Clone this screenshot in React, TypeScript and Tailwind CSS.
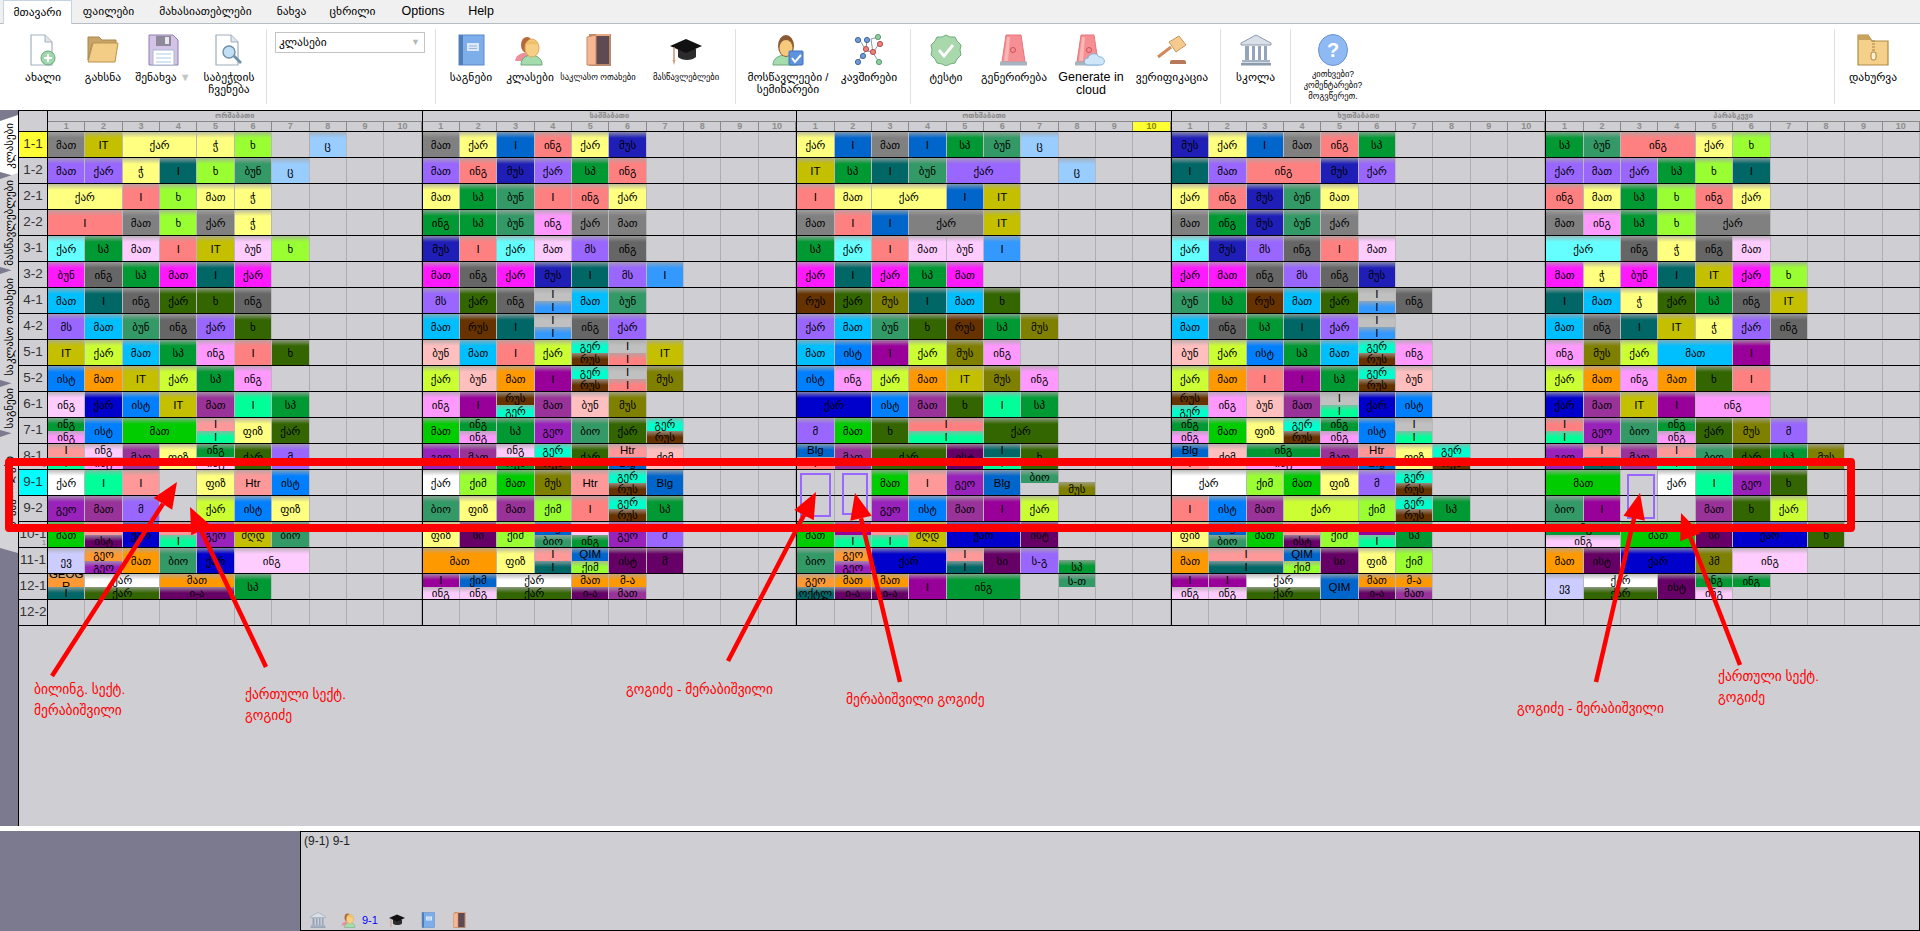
import React from "react";

const C: Record<string, string> = {
  G: "bg-[#808080]", Y: "bg-[#c4c000]", LY: "bg-[#ffff80]", LM: "bg-[#99ff33]", LB: "bg-[#99ccff]",
  PU: "bg-[#9966ff]", TE: "bg-[#006666]", SG: "bg-[#339966]", SA: "bg-[#ff8080]", CY: "bg-[#66ffff]",
  GR: "bg-[#009933]", PK: "bg-[#ffccff]", NV: "bg-[#1f1fb8]", MG: "bg-[#ff19ff]", DG: "bg-[#666666]",
  SK: "bg-[#00bfff]", OG: "bg-[#336600]", YG: "bg-[#ccff33]", BL: "bg-[#0066cc]", PN: "bg-[#ff99ff]",
  RS: "bg-[#ffbfbf]", BR: "bg-[#663300]", BG: "bg-[#00cc00]", OR: "bg-[#ff9900]", AZ: "bg-[#0080ff]",
  RB: "bg-[#0000cc]", PL: "bg-[#993399]", MT: "bg-[#00ff99]", TQ: "bg-[#00ffcc]", VI: "bg-[#990099]",
  GE: "bg-[#9922bb]", OL: "bg-[#808000]", DV: "bg-[#660066]", LG: "bg-[#c0c0c0]", LR: "bg-[#ff9999]",
  DB: "bg-[#3399ff]", LV: "bg-[#ccccff]", W: "bg-[#ffffff]", OO: "bg-[#ff9933]",
};

const GER = "გერ TQ/რუს BR";
const REG = "რუს BR/გერ TQ";
const INGS = "ინგ GR/ინგ PN";
const QAR2 = "ქარ W/ქარ OG 2";
const MA = "მათ OR/ი-ა DV";

const days: string[][][] = [
  [
    ["მათ G", "IT Y", "ქარ LY 2", "ჭ LY", "ხ LM", "-", "ც LB"],
    ["მათ PU", "ქარ PU", "ჭ LY", "I TE", "ხ LM", "ბუნ SG", "ც LB"],
    ["ქარ LY 2", "I SA", "ხ LM", "მათ LY", "ჭ LY"],
    ["I SA 2", "მათ G", "ხ LM", "ქარ G", "ჭ LY"],
    ["ქარ CY", "სპ GR", "მათ PK", "I SA", "IT Y", "ბუნ PK", "ხ LM"],
    ["ბუნ MG", "ინგ DG", "სპ GR", "მათ MG", "I TE", "ქარ MG"],
    ["მათ SK", "I TE", "ინგ DG", "ქარ OG", "ხ OG", "ინგ DG"],
    ["მს PU", "მათ SK", "ბუნ SG", "ინგ DG", "ქარ PU", "ხ OG"],
    ["IT Y", "ქარ YG", "მათ SK", "სპ GR", "ინგ PN", "I SA", "ხ OG"],
    ["ისტ AZ", "მათ OR", "IT Y", "ქარ YG", "სპ GR", "ინგ PN"],
    ["ინგ PK", "ქარ RB", "ისტ AZ", "IT Y", "მათ PL", "I MT", "სპ GR"],
    [INGS, "ისტ AZ", "მათ BG 2", "I LR/I MT", "ფიზ LY", "ქარ OG"],
    ["I LR/I MT", "ინგ PK/ინგ PN", "მათ PL", "ფიზ LY", "ინგ GR/ინგ PK", "ქარ OG", "მ PU"],
    ["ქარ W", "I MT", "I LR", "-", "ფიზ LY", "Htr LR", "ისტ AZ"],
    ["გეო GE", "მათ PL", "მ PU", "-", "ქარ YG", "ისტ AZ", "ფიზ LY"],
    ["მათ BG", "I LR/ისტ DV", "ქარ RB", "I LR/I MT", "გეო GE", "ძღდ Y", "ბიო SG"],
    ["ევ LV", "გეო OO/გეო GE", "მათ OR", "ბიო SG", "ქარ RB", "ინგ PK 2"],
    ["GEOGR OO/I TE", QAR2, "მათ OR/ი-ა DV 2", "სპ GR"],
    [],
  ],
  [
    ["მათ G", "ქარ LY", "I BL", "ინგ SA", "ქარ LY", "მუს NV"],
    ["მათ PU", "ინგ SA", "მუს NV", "ქარ PU", "სპ GR", "ინგ SA"],
    ["მათ LY", "სპ GR", "ბუნ SG", "I SA", "ინგ SA", "ქარ LY"],
    ["ინგ GR", "სპ GR", "ბუნ SG", "ინგ PN", "ქარ G", "მათ G"],
    ["მუს NV", "I SA", "ქარ CY", "მათ PK", "მს PU", "ინგ DG"],
    ["მათ MG", "ინგ DG", "ქარ MG", "მუს NV", "I TE", "მს PU", "I DB"],
    ["მს PU", "ქარ OG", "ინგ DG", "I LG/I DB", "მათ SK", "ბუნ SG"],
    ["მათ SK", "რუს BR", "I TE", "I LG/I DB", "ინგ DG", "ქარ PU"],
    ["ბუნ RS", "მათ SK", "I SA", "ქარ YG", GER, "I LG/I SA", "IT Y"],
    ["ქარ YG", "ბუნ RS", "მათ OR", "I VI", GER, "I LG/I SA", "მუს OL"],
    ["ინგ PN", "I VI", REG, "მათ PL", "ბუნ RS", "მუს OL"],
    ["მათ BG", INGS, "სპ GR", "გეო GE", "ბიო SG", "ქარ OG", GER],
    ["გეო GE", "მათ PL", "ინგ PK/რუს GR", GER, "ქარ OG", "Htr LR/Blg BL", "ქიმ RS"],
    ["ქარ W", "ქიმ LM", "მათ BG", "მუს OL", "Htr LR", GER, "Blg BL"],
    ["ბიო SG", "ფიზ LY", "მათ PL", "ქიმ LM", "I SA", GER, "სპ GR"],
    ["ფიზ LY", "სი DV", "ქიმ LM", "Blg BL/ბიო SG", "I PK/ინგ GR", "გეო GE", "მ PU"],
    ["მათ OR 2", "ფიზ LY", "I LR/I TE", "QIM BL/ქიმ LM", "ისტ DV", "მ DV"],
    ["I VI/ინგ PK", "ქიმ BL/ინგ PK", QAR2, MA, "მ-ა OR/მათ PL"],
    [],
  ],
  [
    ["ქარ LY", "I BL", "მათ G", "I BL", "სპ GR", "ბუნ SG", "ც LB"],
    ["IT Y", "სპ GR", "I TE", "ბუნ SG", "ქარ PU 2", "-", "ც LB"],
    ["I SA", "მათ LY", "ქარ LY 2", "I BL", "IT Y"],
    ["მათ G", "I SA", "I BL", "ქარ G 2", "IT Y"],
    ["სპ GR", "ქარ CY", "I SA", "მათ PK", "ბუნ PK", "I DB"],
    ["ქარ MG", "I TE", "ქარ MG", "სპ GR", "მათ MG"],
    ["რუს BR", "ქარ OG", "მუს OL", "I TE", "მათ SK", "ხ OG"],
    ["ქარ PU", "მათ SK", "ბუნ SG", "ხ OG", "რუს BR", "სპ GR", "მუს OL"],
    ["მათ SK", "ისტ AZ", "I VI", "ქარ YG", "მუს OL", "ინგ PN"],
    ["ისტ AZ", "ინგ PN", "ქარ YG", "მათ OR", "IT Y", "მუს OL", "ინგ PN"],
    ["ქარ RB 2", "ისტ AZ", "მათ PL", "ხ OG", "I MT", "სპ GR"],
    ["მ PU", "მათ BG", "ხ OG", "I SA/I MT 2", "ქარ OG 2"],
    ["Blg BL/I SA", "მათ PL", "ქარ OG 2", "ისტ DV", "I TE/I MT", "ხ OG"],
    ["-", "-", "მათ BG", "I LR", "გეო GE", "Blg BL", "ბიო SG ^", "მუს OL v"],
    ["-", "-", "გეო GE", "ისტ AZ", "მათ PL", "I VI", "ქარ YG"],
    ["მათ BG", "I VI/I MT", "I LR/I MT", "ძღდ Y", "ქარ RB 2", "ისტ DV"],
    ["ბიო SG", "გეო OO/გეო GE", "ქარ RB 2", "I LR/I TE", "სი DV", "ს-გ PU", "სპ GR v"],
    ["გეო OO/ოქტლ TE", MA, MA, "I VI", "ინგ GR 2", "-", "ს-თ SG ^"],
    [],
  ],
  [
    ["მუს NV", "ქარ LY", "I BL", "მათ G", "ინგ SA", "სპ GR"],
    ["I TE", "მათ PU", "ინგ SA 2", "მუს NV", "ქარ PU"],
    ["ქარ LY", "ინგ SA", "მუს NV", "ბუნ SG", "მათ LY"],
    ["მათ G", "ინგ GR", "მუს NV", "ბუნ SG", "ქარ G"],
    ["ქარ CY", "მუს NV", "მს PU", "ინგ DG", "I SA", "მათ PK"],
    ["ქარ MG", "მათ MG", "ინგ DG", "მს PU", "ინგ DG", "მუს NV"],
    ["ბუნ SG", "სპ GR", "რუს BR", "მათ SK", "ქარ OG", "I LG/I DB", "ინგ DG"],
    ["მათ SK", "ინგ DG", "სპ GR", "I TE", "ქარ PU", "I LG/I DB"],
    ["ბუნ RS", "ქარ YG", "ისტ AZ", "სპ GR", "მათ SK", GER, "ინგ PN"],
    ["ქარ YG", "მათ OR", "I SA", "I VI", "სპ GR", GER, "ბუნ RS"],
    [REG, "ინგ PN", "ბუნ RS", "მათ PL", "I LG/I MT", "ქარ RB", "ისტ AZ"],
    [INGS, "მათ BG", "ფიზ LY", GER, INGS, "ისტ AZ", "I LG/I MT"],
    ["Blg BL/I LR", "ქიმ RS", "ინგ GR/ინგ PN 2", "მათ PL", "Htr LR/Blg BL", "ფიზ LY", GER],
    ["ქარ W 2", "ქიმ LM", "მათ BG", "ფიზ LY", "მ PU", GER],
    ["I SA", "ისტ AZ", "მათ PL", "ქარ YG 2", "ქიმ LM", GER, "სპ GR"],
    ["ფიზ LY", "Blg BL/ბიო SG", "მათ BG", "I LR/ისტ DV", "ქიმ LM", "I VI/I MT", "სპ GR"],
    ["მათ OR", "I LR/I TE 2", "QIM BL/ქიმ LM", "სი DV", "ფიზ LY", "ქიმ LM"],
    ["I VI/ინგ PK", "I VI/ინგ PK", QAR2, "QIM BL", MA, "მ-ა OR/მათ PL"],
    [],
  ],
  [
    ["სპ GR", "ბუნ SG", "ინგ SA 2", "ქარ LY", "ხ LM"],
    ["ქარ PU", "მათ PU", "ქარ PU", "სპ GR", "ხ LM", "I TE"],
    ["ინგ SA", "მათ LY", "სპ GR", "ხ LM", "ინგ SA", "ქარ LY"],
    ["მათ G", "ინგ PN", "სპ GR", "ხ LM", "ქარ G 2"],
    ["ქარ CY 2", "ინგ DG", "ჭ LY", "ინგ DG", "მათ PK"],
    ["მათ MG", "ჭ LY", "ბუნ MG", "I TE", "IT Y", "ქარ MG", "ხ LM"],
    ["I TE", "მათ SK", "ჭ LY", "ქარ OG", "სპ GR", "ინგ DG", "IT Y"],
    ["მათ SK", "ინგ DG", "I TE", "IT Y", "ჭ LY", "ქარ PU", "ინგ DG"],
    ["ინგ PN", "მუს OL", "ქარ YG", "მათ SK 2", "I VI"],
    ["ქარ YG", "მათ OR", "ინგ PN", "მათ OR", "ხ OG", "I SA"],
    ["ქარ RB", "მათ PL", "IT Y", "I VI", "ინგ PN 2"],
    ["I SA/I MT", "გეო GE", "ბიო SG", INGS, "ქარ OG", "მუს OL", "მ PU"],
    ["გეო GE", "I LR/I TE", "მათ PL", "I LR/I MT", "ბიო SG", "ქარ OG", "სპ GR", "მუს OL"],
    ["მათ BG 2", "-", "ქარ W", "I MT", "გეო GE", "ხ OG"],
    ["ბიო SG", "I VI", "-", "-", "მათ PL", "ხ OG", "ქარ YG"],
    ["ინგ GR/ინგ PK 2", "მათ BG 2", "სი DV", "ქარ RB 2", "ხ OG"],
    ["მათ OR", "ისტ DV", "ქარ RB 2", "ჰმ OL", "ინგ PK 2"],
    ["ევ LV", QAR2, "ისტ DV", "ინგ GR/ინგ PK", "ინგ GR ^"],
    [],
  ],
];

const rowNames = ["1-1", "1-2", "2-1", "2-2", "3-1", "3-2", "4-1", "4-2", "5-1", "5-2", "6-1", "7-1", "8-1", "9-1", "9-2", "10-1", "11-1", "12-1", "12-2"];
const dayNames = ["ორშაბათი", "სამშაბათი", "ოთხშაბათი", "ხუთშაბათი", "პარასკევი"];
const periods = [1, 2, 3, 4, 5, 6, 7, 8, 9, 10];

const isLatin = (s: string) => /^[A-Za-z]+$/.test(s);

function Label({ text }: { text: string }) {
  const latin = isLatin(text);
  return (
    <span className={latin ? "relative block text-[11.5px] leading-[12px] break-all" : "relative block text-[11px] leading-[12px]"}>
      {text}
    </span>
  );
}

const sheen =
  "before:absolute before:inset-x-0 before:top-0 before:h-[6px] before:bg-linear-to-b before:from-[#a8a8a8c0] before:to-transparent";

function Part({ label, color, className }: { label: string; color: string; className: string }) {
  return (
    <div className={`relative overflow-hidden flex items-center justify-center text-center text-black ${sheen} ${C[color]} ${className}`}>
      <Label text={label} />
    </div>
  );
}

const spanCls: Record<number, string> = { 1: "col-span-1", 2: "col-span-2" };

function Cell({ token }: { token: string }) {
  if (token === "-") return <div className="border-r border-[#aeaeb2]" />;
  const bits = token.split(" ");
  const last = bits[bits.length - 1];
  let span = 1;
  let half = "";
  if (last === "2") {
    span = 2;
    bits.pop();
  } else if (last === "^" || last === "v") {
    half = last;
    bits.pop();
  }
  const body = bits.join(" ");
  if (body.includes("/")) {
    const [a, b] = body.split("/");
    const [la, ca] = a.split(" ");
    const [lb, cb] = b.split(" ");
    return (
      <div className={`flex flex-col min-w-0 border-r border-[#b8b8bc] ${spanCls[span]}`}>
        <Part label={la} color={ca} className="h-[12.5px]" />
        <Part label={lb} color={cb} className="h-[12.5px]" />
      </div>
    );
  }
  const [l, c] = body.split(" ");
  if (half) {
    return (
      <div className={`flex flex-col min-w-0 border-r border-[#aeaeb2] ${half === "^" ? "justify-start" : "justify-end"}`}>
        <Part label={l} color={c} className="h-[13px]" />
      </div>
    );
  }
  return <Part label={l} color={c} className={`h-full min-w-0 border-r border-[#b8b8bc] ${spanCls[span]}`} />;
}

function DayRow({ tokens }: { tokens: string[] }) {
  const used = tokens.reduce((n, t) => n + (t.endsWith(" 2") ? 2 : 1), 0);
  const fill = Array.from({ length: Math.max(0, 10 - used) }, () => "-");
  return (
    <div className="flex-1 min-w-0 border-l border-black grid grid-cols-10 h-full">
      {[...tokens, ...fill].map((t, i) => (
        <Cell key={i} token={t} />
      ))}
    </div>
  );
}

/* ---------- icons ---------- */
type IP = { s?: number };
const Ico = ({ s = 32, children }: IP & { children: React.ReactNode }) => (
  <svg width={s} height={s} viewBox="0 0 32 32" className="block shrink-0">{children}</svg>
);
const IDocNew = (p: IP) => (
  <Ico {...p}>
    <path d="M4 1h14l7 7v23H4z" fill="#fff" stroke="#a5b2bf" strokeWidth="1.2" />
    <path d="M18 1v7h7" fill="#dfe5eb" stroke="#a5b2bf" />
    <circle cx="21" cy="24" r="7" fill="#9fd8ab" stroke="#6aa57a" />
    <path d="M21 20v8M17 24h8" stroke="#fff" strokeWidth="2" />
  </Ico>
);
const IFolder = (p: IP) => (
  <Ico {...p}>
    <path d="M1 3h11l3 3h14v4H5L1 26z" fill="#c8a468" stroke="#a98748" />
    <path d="M6 9h25l-3 19H1z" fill="#f3cd85" stroke="#b8934f" />
  </Ico>
);
const ISave = (p: IP) => (
  <Ico {...p}>
    <path d="M2 1h24l5 5v25H2z" fill="#d3c3e6" stroke="#8f7fb2" />
    <rect x="9" y="2" width="15" height="10" fill="#8e8a9a" />
    <rect x="18" y="3" width="4" height="7" fill="#e8e6ee" />
    <rect x="6" y="16" width="21" height="15" fill="#fff" stroke="#a9b8d0" />
    <path d="M9 20h15M9 24h15M9 28h15" stroke="#a9cdea" />
  </Ico>
);
const IPreview = (p: IP) => (
  <Ico {...p}>
    <path d="M3 1h15l7 7v23H3z" fill="#fff" stroke="#9faebc" strokeWidth="1.2" />
    <path d="M18 1v7h7" fill="#dfe5eb" stroke="#9faebc" />
    <circle cx="16" cy="18" r="6" fill="#c2e0f5" stroke="#6f8ea8" strokeWidth="1.4" />
    <path d="M21 22l7 7" stroke="#6f8ea8" strokeWidth="2.6" />
  </Ico>
);
const IBook = (p: IP) => (
  <Ico {...p}>
    <rect x="4" y="1" width="25" height="30" fill="#7eaeea" stroke="#5b8ac4" />
    <rect x="4" y="1" width="4" height="30" fill="#4f7db8" />
    <rect x="12" y="9" width="12" height="8" fill="#dbe8f8" />
    <path d="M14 12h8M14 14.500h8" stroke="#9ab8dc" />
  </Ico>
);
const IPeople = (p: IP) => (
  <Ico {...p}>
    <path d="M1 27c1-6 5-7 8-8h5v8z" fill="#ee8f9c" />
    <ellipse cx="13" cy="11" rx="6" ry="8" fill="#b5683a" />
    <path d="M7 31c0-7 5-9 9-10h2c5 1 10 3 10 10z" fill="#a5dcae" stroke="#6ea87a" />
    <ellipse cx="18" cy="14" rx="7" ry="9" fill="#f6cf85" stroke="#d9a95c" />
    <path d="M11 11c3-6 11-6 14 0-4-1-10-1-14 0z" fill="#edc06a" />
  </Ico>
);
const IDoor = (p: IP) => (
  <Ico {...p}>
    <rect x="8" y="1" width="20" height="30" fill="#5e4a52" stroke="#b98a6c" strokeWidth="2" />
    <path d="M5 3l9-2v30H5z" fill="#f6b694" stroke="#c98a66" />
    <path d="M28 1h-14" stroke="#e9a882" strokeWidth="2" />
  </Ico>
);
const ICap = (p: IP) => (
  <Ico {...p}>
    <path d="M8 15v8c4 4 14 4 18 0v-8z" fill="#2c2c2c" />
    <path d="M0 12L16 5l16 7-16 7z" fill="#111" />
    <path d="M4 13v13" stroke="#c88a68" strokeWidth="1.4" />
    <path d="M2.500 26h3l-1.500 5z" fill="#d79a78" />
  </Ico>
);
const IStudent = (p: IP) => (
  <Ico {...p}>
    <path d="M1 31c0-7 6-9 10-10h6c4 1 8 2 8 10z" fill="#a5dcae" stroke="#6ea87a" />
    <ellipse cx="14" cy="12" rx="8" ry="11" fill="#8a5a34" />
    <ellipse cx="14" cy="14" rx="6.500" ry="8" fill="#f6c97d" />
    <rect x="17" y="17" width="14" height="14" rx="1" fill="#5d92de" stroke="#3f6fb5" />
    <path d="M20 24l3 4 6-7" fill="none" stroke="#fff" strokeWidth="2" />
  </Ico>
);
const INet = (p: IP) => (
  <Ico {...p}>
    <path d="M6 5l7 11-9 13M14 5l-1 11 7 3 7-11M20 19l-2-14 8-2M20 19l6 9M13 16l7 3" fill="none" stroke="#8a9aa0" />
    <circle cx="5" cy="6" r="2.600" fill="#6f9ade" stroke="#43679c" />
    <circle cx="14" cy="6" r="2.600" fill="#6f9ade" stroke="#43679c" />
    <circle cx="25" cy="3" r="2.600" fill="#8fcf9f" stroke="#5c9a6e" />
    <circle cx="13" cy="15" r="2.600" fill="#ee7f7f" stroke="#b44f4f" />
    <circle cx="20" cy="18" r="2.600" fill="#ee7f7f" stroke="#b44f4f" />
    <circle cx="27" cy="10" r="2.600" fill="#ee7f7f" stroke="#b44f4f" />
    <circle cx="5" cy="28" r="2.600" fill="#6f9ade" stroke="#43679c" />
    <circle cx="10" cy="22" r="2.600" fill="#6f9ade" stroke="#43679c" />
    <circle cx="26" cy="28" r="2.600" fill="#8fcf9f" stroke="#5c9a6e" />
  </Ico>
);
const IBadge = (p: IP) => (
  <Ico {...p}>
    <path d="M16 1l4 2 5 0 2 4 4 4-1 5 1 5-4 4-2 4-5 1-4 2-4-2-5-1-2-4-4-4 1-5-1-5 4-4 2-4 5 0z" fill="#a9d8ac" stroke="#6fae78" />
    <path d="M9 16l5 6 9-11" fill="none" stroke="#fff" strokeWidth="2.800" />
  </Ico>
);
const IAlarm = (p: IP) => (
  <Ico {...p}>
    <path d="M8 1h15l4 27H4z" fill="#f58f93" stroke="#e5767c" />
    <path d="M9 3h3l-2 24H6z" fill="#fab5b5" />
    <circle cx="15" cy="16" r="2.500" fill="none" stroke="#c95058" />
    <rect x="2" y="27.500" width="27" height="4" fill="#a8b3c0" />
  </Ico>
);
const IAlarmCloud = (p: IP) => (
  <Ico {...p}>
    <path d="M6 1h13l4 27H2z" fill="#f58f93" stroke="#e5767c" />
    <path d="M7 3h3L8 27H4z" fill="#fab5b5" />
    <circle cx="14" cy="16" r="2.500" fill="none" stroke="#c95058" />
    <rect x="0" y="27.500" width="24" height="4" fill="#a8b3c0" />
    <path d="M13 31c-5 0-5-7 0-7 1-5 9-6 11-1 6-1 8 8 1 8z" fill="#cfe6f8" stroke="#7fb2dc" />
  </Ico>
);
const IGavel = (p: IP) => (
  <Ico {...p}>
    <path d="M2 23L15 13" stroke="#d28a5c" strokeWidth="3" />
    <path d="M13 8l10-6 7 9-10 7z" fill="#f6c98e" stroke="#c7955c" />
    <path d="M14 30h16v-2c0-1-1-2-2-2H16c-1 0-2 1-2 2z" fill="#b8795a" />
  </Ico>
);
const IBank = (p: IP) => (
  <Ico {...p}>
    <path d="M16 1L1 9v2h30V9z" fill="#d9e0e8" stroke="#8c9aac" />
    <path d="M5 12h4v14H5zM12 12h3v14h-3zM18 12h3v14h-3zM24 12h3v14h-3z" fill="#94a4bb" />
    <rect x="2" y="26" width="28" height="2.500" fill="#a5b3c6" />
    <rect x="1" y="29" width="30" height="2.500" fill="#8c9aac" />
  </Ico>
);
const IHelp = (p: IP) => (
  <Ico {...p}>
    <ellipse cx="16" cy="16" rx="14.500" ry="15.500" fill="#8fb9f2" stroke="#6a94d2" />
    <text x="16" y="23" textAnchor="middle" fontSize="20" fontWeight="700" fill="#fff" fontFamily="Liberation Sans">?</text>
  </Ico>
);
const IZip = (p: IP) => (
  <Ico {...p}>
    <path d="M1 1h10l4 6h16v24H1z" fill="#f4d08a" stroke="#b08a45" strokeWidth="1.200" />
    <path d="M1 1h10l3 5H1z" fill="#c9a25c" />
    <path d="M15 7h3M15 10h3M15 13h3M15 16h3" stroke="#a88443" />
    <rect x="14" y="18" width="5" height="8" rx="2" fill="#fff2cc" stroke="#a88443" />
  </Ico>
);

function Tool({ w, icon, children, small, tight }: { w: string; icon: React.ReactNode; children: React.ReactNode; small?: boolean; tight?: boolean }) {
  return (
    <div className={`${w} shrink-0 flex flex-col items-center`}>
      <div className="h-[45px] pt-[10px] flex items-start justify-center">{icon}</div>
      <div className={`flex items-start justify-center text-center text-black ${small ? `text-[8.5px] leading-[11px] w-full ${tight ? "" : "pt-[3px]"}` : "text-[11.5px] leading-[12px] pt-[2px]"}`}>
        {children}
      </div>
    </div>
  );
}
const Sep = () => <div className="w-px h-[75px] mt-[5px] bg-[#e0e0e0] shrink-0" />;

function Arrow({ x1, y1, x2, y2 }: { x1: number; y1: number; x2: number; y2: number }) {
  const a = Math.atan2(y2 - y1, x2 - x1);
  const l = 26, hw = 11;
  const bx = x2 - l * Math.cos(a), by = y2 - l * Math.sin(a);
  const nx = -Math.sin(a), ny = Math.cos(a);
  return (
    <g>
      <line x1={x1} y1={y1} x2={bx} y2={by} stroke="#ff0000" strokeWidth="4.500" />
      <polygon points={`${x2},${y2} ${bx + nx * hw},${by + ny * hw} ${bx - nx * hw},${by - ny * hw}`} fill="#ff0000" />
    </g>
  );
}

function Note({ cls, lines }: { cls: string; lines: string[] }) {
  return (
    <div className={`absolute text-[#ff0000] text-[13.5px] leading-[21px] whitespace-nowrap ${cls}`}>
      {lines.map((l) => (
        <div key={l}>{l}</div>
      ))}
    </div>
  );
}

const tabs = [
  { t: "კლასები", h: "h-[62px]", on: true },
  { t: "მასწავლებლები", h: "h-[99px]", on: false },
  { t: "საკლასო ოთახები", h: "h-[117px]", on: false },
  { t: "საგნები", h: "h-[54px]", on: false },
  { t: "გაკვეთილები", h: "h-[122px]", on: false },
];

const menu = [
  { t: "ფაილები", w: "w-[73px]" },
  { t: "მახასიათებლები", w: "w-[121px]" },
  { t: "ნახვა", w: "w-[51px]" },
  { t: "ცხრილი", w: "w-[71px]" },
  { t: "Options", w: "w-[70px] text-[12.5px]" },
  { t: "Help", w: "w-[46px] text-[12.5px]" },
];

export default function App() {
  return (
    <div
      className="relative w-[1920px] h-[931px] overflow-hidden flex flex-col bg-white text-black"
      style={{ fontFamily: '"Liberation Sans", "DejaVu Sans", sans-serif' }}
    >
      {/* menu tabs */}
      <div className="h-[24px] shrink-0 bg-[#f0f0f0] border-b border-[#b6bcc4] flex pl-[3px] text-[11.5px]">
        <div className="w-[69px] h-[24px] bg-white border border-b-0 border-[#c5d3e3] flex items-center justify-center">მთავარი</div>
        {menu.map((m) => (
          <div key={m.t} className={`${m.w} flex items-center justify-center`}>{m.t}</div>
        ))}
      </div>

      {/* toolbar */}
      <div className="h-[86px] shrink-0 bg-white flex items-start">
        <div className="w-[266px] shrink-0 flex pl-[13px]">
          <Tool w="w-[60px]" icon={<IDocNew />}>ახალი</Tool>
          <Tool w="w-[60px]" icon={<IFolder />}>გახსნა</Tool>
          <Tool w="w-[60px]" icon={<ISave />}>
            <span className="whitespace-nowrap">შენახვა <span className="text-[#c4c4c4] text-[11px]">▼</span></span>
          </Tool>
          <Tool w="w-[72px]" icon={<IPreview />}>საბეჭდის ჩვენება</Tool>
        </div>
        <Sep />
        <div className="w-[168px] shrink-0 pl-[8px] pt-[8px]">
          <div className="w-[150px] h-[21px] border border-[#c4c4c4] flex items-center justify-between pl-[3px] pr-[4px] text-[11.5px]">
            <span>კლასები</span>
            <span className="text-[#b8b8b8] text-[9px]">▼</span>
          </div>
        </div>
        <Sep />
        <div className="w-[299px] shrink-0 flex pl-[5px]">
          <Tool w="w-[60px]" icon={<IBook />}>საგნები</Tool>
          <Tool w="w-[58px]" icon={<IPeople />}>კლასები</Tool>
          <Tool w="w-[78px]" small icon={<IDoor />}>საკლასო ოთახები</Tool>
          <Tool w="w-[98px]" small icon={<ICap />}>მასწავლებლები</Tool>
        </div>
        <Sep />
        <div className="w-[174px] shrink-0 flex">
          <Tool w="w-[104px]" icon={<IStudent />}>მოსწავლეები / სემინარები</Tool>
          <Tool w="w-[58px]" icon={<INet />}>კავშირები</Tool>
        </div>
        <Sep />
        <div className="w-[309px] shrink-0 flex">
          <Tool w="w-[70px]" icon={<IBadge />}>ტესტი</Tool>
          <Tool w="w-[66px]" icon={<IAlarm />}>გენერირება</Tool>
          <Tool w="w-[88px]" icon={<IAlarmCloud />}><span className="text-[12.5px] leading-[13px]">Generate in cloud</span></Tool>
          <Tool w="w-[74px]" icon={<IGavel />}>ვერიფიკაცია</Tool>
        </div>
        <Sep />
        <div className="w-[69px] shrink-0 flex">
          <Tool w="w-[69px]" icon={<IBank />}>სკოლა</Tool>
        </div>
        <Sep />
        <div className="w-[543px] shrink-0 flex">
          <Tool w="w-[84px]" small tight icon={<IHelp />}>კითხვები?<br />კომენტარები?<br />მოგვწერეთ.</Tool>
        </div>
        <Sep />
        <div className="flex-1 flex justify-center pr-[9px]">
          <Tool w="w-[66px]" icon={<IZip />}>დახურვა</Tool>
        </div>
      </div>

      {/* main */}
      <div className="h-[716px] shrink-0 flex bg-[#cfced3]">
        {/* vertical tabs */}
        <div className="w-[19px] shrink-0 bg-[#7b7a8e] border-r border-black pt-[5px] flex flex-col">
          {tabs.map((t) => (
            <div
              key={t.t}
              className={`${t.h} -mb-[4px] w-full flex items-center justify-center overflow-hidden [clip-path:polygon(0_6px,100%_0,100%_100%,0_calc(100%-5px))] ${t.on ? "bg-white" : "bg-[#d4d3d8]"}`}
            >
              <span className="[writing-mode:vertical-rl] rotate-180 text-[11px] whitespace-nowrap">{t.t}</span>
            </div>
          ))}
        </div>

        {/* timetable */}
        <div className="flex-1 min-w-0 flex flex-col">
          <div className="flex h-[22px] border-y border-black">
            <div className="w-[28px] shrink-0" />
            {dayNames.map((d, di) => (
              <div key={d} className="flex-1 min-w-0 border-l border-black flex flex-col">
                <div className="h-[11px] border-b border-[#8a8a8a] flex items-center justify-center text-[7.5px] text-[#8c8c8c] font-bold">{d}</div>
                <div className="flex-1 grid grid-cols-10">
                  {periods.map((p) => (
                    <div
                      key={p}
                      className={`border-r border-[#8a8a8a] flex items-center justify-center text-[9px] font-bold leading-none ${di === 2 && p === 10 ? "bg-[#ffff33] text-[#888800]" : "text-[#8c8c8c]"}`}
                    >
                      {p}
                    </div>
                  ))}
                </div>
              </div>
            ))}
          </div>
          {rowNames.map((r, ri) => (
            <div key={r} className="h-[26px] shrink-0 flex border-b border-black">
              <div className={`relative w-[28px] shrink-0 flex items-center justify-center text-[13.5px] text-[#333] ${r === "1-1" ? "bg-[#ffff33]" : r === "9-1" ? "bg-[#00ffff]" : ""}`}>
                {r}
                {(r === "8-1" || r === "10-1") && (
                  <span className="absolute right-[1px] bottom-0 text-[7px] leading-[8px] text-[#777]">1</span>
                )}
              </div>
              {days.map((d, di) => (
                <DayRow key={di} tokens={d[ri]} />
              ))}
            </div>
          ))}
        </div>
      </div>

      {/* white divider */}
      <div className="h-[5px] shrink-0 bg-white" />

      {/* bottom panel */}
      <div className="flex-1 flex bg-[#7b7a8e]">
        <div className="w-[300px] shrink-0" />
        <div className="flex-1 bg-[#cfced3] border border-black flex flex-col justify-between pl-[3px]">
          <div className="text-[12px] leading-[14px] pt-[2px] text-[#222]">(9-1) 9-1</div>
          <div className="flex items-center h-[18px] pl-[6px] mb-[1px]">
            <IBank s={16} />
            <div className="w-[15px]" />
            <IPeople s={16} />
            <span className="text-[11px] text-[#0000ff] w-[32px] pl-[5px]">9-1</span>
            <ICap s={16} />
            <div className="w-[15px]" />
            <IBook s={16} />
            <div className="w-[15px]" />
            <IDoor s={16} />
          </div>
        </div>
      </div>

      {/* annotations drawn over the timetable */}
      <div className="absolute left-[5px] top-[458px] w-[1850px] h-[74px] border-[8px] border-[#ff0000] rounded-[4px] pointer-events-none" />
      <div className="absolute left-[800px] top-[473px] w-[31px] h-[44px] border-2 border-[#9966ff]" />
      <div className="absolute left-[842px] top-[473px] w-[26px] h-[42px] border-2 border-[#9966ff]" />
      <div className="absolute left-[1627px] top-[474px] w-[28px] h-[45px] border-2 border-[#9966ff]" />
      <svg className="absolute left-0 top-0 pointer-events-none" width="1920" height="931">
        <Arrow x1={52} y1={676} x2={177} y2={482} />
        <Arrow x1={266} y1={667} x2={190} y2={507} />
        <Arrow x1={728} y1={661} x2={816} y2={492} />
        <Arrow x1={900} y1={682} x2={855} y2={493} />
        <Arrow x1={1596} y1={682} x2={1640} y2={493} />
        <Arrow x1={1740} y1={665} x2={1681} y2={513} />
      </svg>
      <Note cls="left-[34px] top-[679px]" lines={["ბილინგ. სექტ.", "მერაბიშვილი"]} />
      <Note cls="left-[245px] top-[684px]" lines={["ქართული სექტ.", "გოგიძე"]} />
      <Note cls="left-[626px] top-[679px]" lines={["გოგიძე - მერაბიშვილი"]} />
      <Note cls="left-[846px] top-[689px]" lines={["მერაბიშვილი გოგიძე"]} />
      <Note cls="left-[1517px] top-[698px]" lines={["გოგიძე - მერაბიშვილი"]} />
      <Note cls="left-[1718px] top-[666px]" lines={["ქართული სექტ.", "გოგიძე"]} />
    </div>
  );
}
